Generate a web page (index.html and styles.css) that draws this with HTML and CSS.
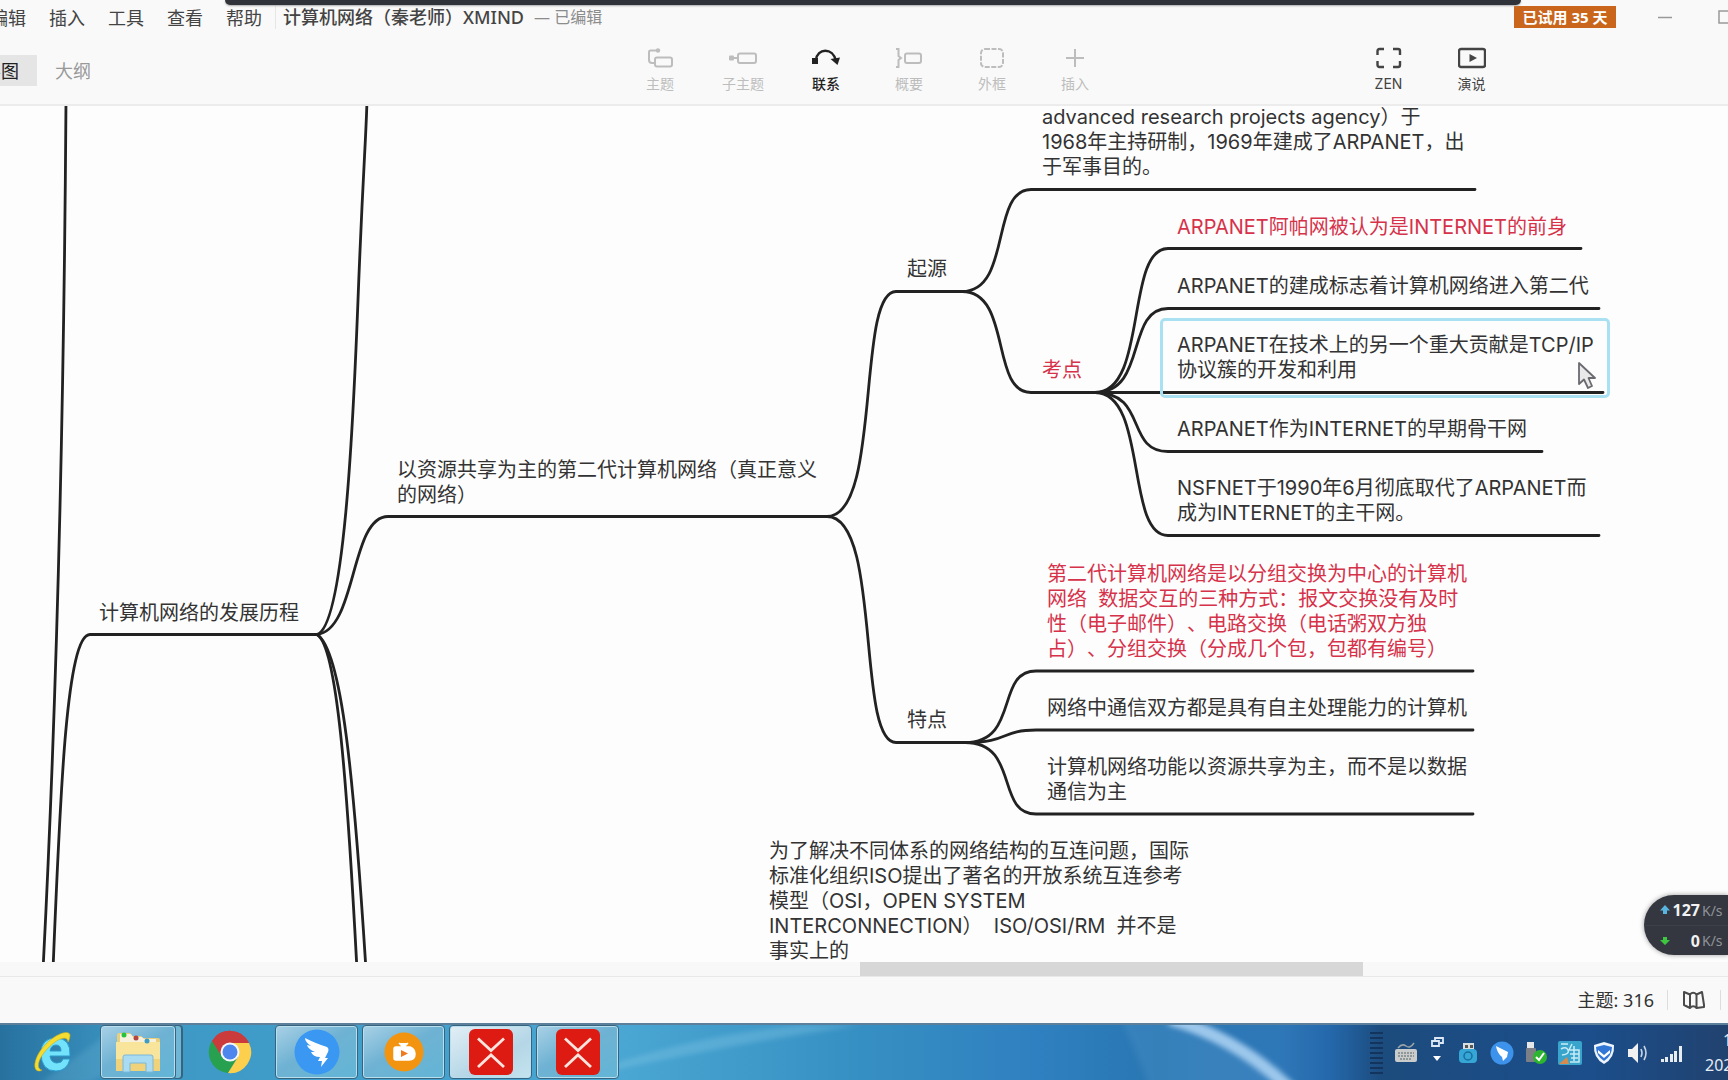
FILE: index.html
```html
<!DOCTYPE html>
<html lang="zh-CN">
<head>
<meta charset="utf-8">
<title>计算机网络（秦老师）XMIND</title>
<link rel="stylesheet" href="styles.css">
</head>
<body>
<div class="app">
  <div class="screen-bar"></div>
  <header class="titlebar">
    <nav class="menu">
      <button type="button">编辑</button>
      <button type="button">插入</button>
      <button type="button">工具</button>
      <button type="button">查看</button>
      <button type="button">帮助</button>
    </nav>
    <div class="doc"><span class="doc-name">计算机网络（秦老师）XMIND</span><span class="doc-state">— 已编辑</span></div>
    <div class="window">
      <button type="button" class="trial">已试用 35 天</button>
      <button type="button" class="win-btn" aria-label="最小化"><svg width="14" height="14" viewBox="0 0 14 14"><path d="M0 7.5H14" stroke="#999" stroke-width="1.5"/></svg></button>
      <button type="button" class="win-btn" aria-label="最大化"><svg width="14" height="14" viewBox="0 0 14 14"><rect x="1" y="1" width="12" height="12" fill="none" stroke="#999" stroke-width="1.5"/></svg></button>
    </div>
  </header>

  <div class="toolbar">
    <div class="views">
      <button type="button" class="view view-on">思维导图</button>
      <button type="button" class="view">大纲</button>
    </div>
    <div class="tools">
      <button type="button" class="tool"><svg width="28" height="24" viewBox="0 0 28 24" fill="none" stroke="currentColor" stroke-width="2"><path d="M11 4.500H4.500Q3 4.500 3 6V14Q3 17 6 17H8"/><circle cx="12" cy="4.500" r="2.200" fill="currentColor" stroke="none"/><rect x="9" y="11.500" width="17" height="9" rx="2"/></svg>主题</button>
      <button type="button" class="tool"><svg width="28" height="24" viewBox="0 0 28 24" fill="none" stroke="currentColor" stroke-width="2"><path d="M3 12H9"/><rect x="0" y="9.500" width="5" height="5" rx="1" fill="currentColor" stroke="none"/><rect x="9" y="7.500" width="18" height="9.500" rx="2"/></svg>子主题</button>
      <button type="button" class="tool tool-on"><svg width="28" height="24" viewBox="0 0 28 24" fill="none" stroke="currentColor" stroke-width="2.400"><path d="M4 14C5 2 21 1 24 15"/><rect x="0" y="12" width="6" height="6" fill="currentColor" stroke="none"/><path d="M18.500 13L28 11.500L25.500 19Z" fill="currentColor" stroke="none"/></svg>联系</button>
      <button type="button" class="tool"><svg width="28" height="24" viewBox="0 0 28 24" fill="none" stroke="currentColor" stroke-width="2"><path d="M1 3H3.500V10L6 12L3.500 14V21H1"/><rect x="10" y="7.500" width="16" height="9.500" rx="2"/></svg>概要</button>
      <button type="button" class="tool"><svg width="28" height="24" viewBox="0 0 28 24" fill="none" stroke="currentColor" stroke-width="2"><rect x="3" y="3" width="22" height="18" rx="4" stroke-dasharray="5 1.500"/></svg>外框</button>
      <button type="button" class="tool"><svg width="28" height="24" viewBox="0 0 28 24" fill="none" stroke="currentColor" stroke-width="2"><path d="M5 12H23M14 3V21"/></svg>插入</button>
    </div>
    <div class="modes">
      <button type="button" class="tool tool-mode"><svg width="28" height="24" viewBox="0 0 28 24" fill="none" stroke="currentColor" stroke-width="2.400"><path d="M2.500 9V5Q2.500 3 4.500 3H9M18 3H23Q25 3 25 5V9M25 15V19Q25 21 23 21H18M9 21H4.500Q2.500 21 2.500 19V15"/></svg>ZEN</button>
      <button type="button" class="tool tool-mode"><svg width="28" height="24" viewBox="0 0 28 24" fill="none" stroke="currentColor" stroke-width="2.400"><rect x="1" y="3" width="26" height="18" rx="2"/><path d="M11.500 8L19 12L11.500 16Z" fill="currentColor" stroke="none"/></svg>演说</button>
    </div>
  </div>

  <main class="canvas">
    <svg class="links" width="1728" height="856" viewBox="0 106 1728 856" fill="none" stroke="#222" stroke-width="2.800" stroke-linecap="round" stroke-linejoin="round">
      <path d="M66 100C64 400 57 700 43 970"/>
      <path d="M53 970C60 800 66 634.500 90 634.500H317"/>
      <path d="M317 634.500C344 626 353 430 358 300S366 140 367 100"/>
      <path d="M317 634.500C357 630 350 516.500 388 516.500H827"/>
      <path d="M317 634.500C337 646 347 780 357 970"/>
      <path d="M317 634.500C342 650 354 780 366 970"/>
      <path d="M827 516.500C882 516.500 856 291.500 896 291.500H966"/>
      <path d="M827 516.500C882 516.500 856 742.500 896 742.500H970"/>
      <path d="M962 291.500C1012 291.500 990 189.500 1031 189.500H1475"/>
      <path d="M962 291.500C1012 291.500 990 392.500 1031 392.500H1603"/>
      <path d="M1095 392.500C1148 392.500 1125 248.500 1168 248.500H1581"/>
      <path d="M1095 392.500C1148 392.500 1125 308.500 1168 308.500H1599"/>
      <path d="M1095 392.500C1148 392.500 1125 451.500 1168 451.500H1542"/>
      <path d="M1095 392.500C1148 392.500 1125 535.500 1168 535.500H1599"/>
      <path d="M965 742.500C1020 742.500 995 671 1036 671H1473"/>
      <path d="M965 742.500C1010 742.500 1000 730 1036 730H1473"/>
      <path d="M965 742.500C1020 742.500 995 814 1036 814H1473"/>
    </svg>
    <div class="selection"></div>
    <p class="node n-history">计算机网络的发展历程</p>
    <p class="node n-second">以资源共享为主的第二代计算机网络（真正意义<br>的网络）</p>
    <p class="node n-origin">起源</p>
    <p class="node n-arpa">advanced research projects agency）于<br>1968年主持研制，1969年建成了ARPANET，出<br>于军事目的。</p>
    <p class="node n-exam red">考点</p>
    <p class="node n-e1 red">ARPANET阿帕网被认为是INTERNET的前身</p>
    <p class="node n-e2">ARPANET的建成标志着计算机网络进入第二代</p>
    <p class="node n-e3">ARPANET在技术上的另一个重大贡献是TCP/IP<br>协议簇的开发和利用</p>
    <p class="node n-e4">ARPANET作为INTERNET的早期骨干网</p>
    <p class="node n-e5">NSFNET于1990年6月彻底取代了ARPANET而<br>成为INTERNET的主干网。</p>
    <p class="node n-feature">特点</p>
    <p class="node n-f1 red">第二代计算机网络是以分组交换为中心的计算机<br>网络&nbsp; 数据交互的三种方式：报文交换没有及时<br>性（电子邮件）、电路交换（电话粥双方独<br>占）、分组交换（分成几个包，包都有编号）</p>
    <p class="node n-f2">网络中通信双方都是具有自主处理能力的计算机</p>
    <p class="node n-f3">计算机网络功能以资源共享为主，而不是以数据<br>通信为主</p>
    <p class="node n-iso">为了解决不同体系的网络结构的互连问题，国际<br>标准化组织ISO提出了著名的开放系统互连参考<br>模型（OSI，OPEN SYSTEM<br>INTERCONNECTION）&nbsp; ISO/OSI/RM&nbsp; 并不是<br>事实上的</p>
    <svg class="cursor" width="20" height="30" viewBox="0 0 20 30"><path d="M2 2V23L7 18.500L11 27L15 25L11.500 17H18Z" fill="#e9e9e9" stroke="#6a6a70" stroke-width="1.800" stroke-linejoin="round"/></svg>
    <aside class="speed">
      <div class="speed-row"><svg width="10" height="10" viewBox="0 0 10 10"><path d="M5 0L10 5.500H7V9H3V5.500H0Z" fill="#57b5e0"/></svg><b>127</b><span>K/s</span></div>
      <div class="speed-row"><svg width="10" height="10" viewBox="0 0 10 10"><path d="M5 9L0 4H3V1H7V4H10Z" fill="#3dc63f"/></svg><b>0</b><span>K/s</span></div>
    </aside>
  </main>
  <div class="scroll"><div class="thumb"></div></div>

  <footer class="status">
    <span class="count">主题: 316</span>
    <button type="button" class="map" aria-label="导航"><svg width="24" height="20" viewBox="0 0 24 20" fill="none" stroke="#4a4a4a" stroke-width="2" stroke-linejoin="round"><path d="M2 2L8 4.500V18L2 15ZM8 4.500Q11 1 14.500 4.500V18Q11 14.500 8 18M14.500 4.500L20 2L22 15V17L14.500 18"/></svg></button>
  </footer>

  <footer class="taskbar">
    <svg class="streak" viewBox="0 0 1728 57" preserveAspectRatio="none" aria-hidden="true">
      <defs><filter id="soft"><feGaussianBlur stdDeviation="3"/></filter></defs>
      <path d="M600 45Q700 10 800 0H860Q720 22 600 50Z" fill="#8fd0ea" opacity=".3" filter="url(#soft)"/>
      <path d="M1120 -8Q1135 25 1150 66H1290Q1235 12 1170 -8Z" fill="#5d9fd4" opacity=".25" filter="url(#soft)"/>
      <path d="M1170 -6Q1235 12 1290 66" fill="none" stroke="#a9d0f2" stroke-width="13" opacity=".9" filter="url(#soft)"/>
      <path d="M40 60L120 0H180L90 60Z" fill="#8fd0ea" opacity=".18" filter="url(#soft)"/>
    </svg>
    <div class="apps">
      <button type="button" class="app-btn plain ie" aria-label="Internet Explorer"><svg width="50" height="48" viewBox="0 0 50 48"><path d="M13 25Q13 10 28 10T42 28H22Q23 35 29 35Q34 35 35 31H42Q39 43 28 43Q13 43 13 25ZM22 23H33Q33 17 28 17T22 23Z" fill="#72e3fa" stroke="#2a9bcc" stroke-width="1" fill-rule="evenodd"/><path d="M12 43C4 44 5 30 17 17C27 6 41 1 42 7C42 10 41 12 40 14C40 7 30 10 21 19C9 31 8 41 14 42Z" fill="#f5dc30" stroke="#c9ae1c" stroke-width=".6"/></svg></button>
      <button type="button" class="app-btn stack" aria-label="资源管理器"><svg width="48" height="46" viewBox="0 0 48 46"><path d="M3 6Q3 4 5 4H16L18 7H27L29 9H44Q46 9 46 11V42H3Z" fill="#e9cf7c"/><path d="M6 5H17L19 8H28L30 10H42V16H6Z" fill="#f6f1dc"/><path d="M2 13H46V42H2Z" fill="#f8e49a"/><path d="M2 30H46V42H2Z" fill="#efd27a"/><circle cx="10" cy="6" r="2.500" fill="#27c33a"/><circle cx="22" cy="9" r="2.500" fill="#b5453f"/><circle cx="33" cy="12" r="2.500" fill="#3c9cc4"/><path d="M9 28Q9 26 11 26H37Q39 26 39 28V43H32V34H16V43H9Z" fill="#a9dbf3" stroke="#7db8d9" stroke-width="1"/></svg></button>
      <button type="button" class="app-btn plain chrome" aria-label="Chrome"><svg width="44" height="44" viewBox="0 0 44 44"><path d="M22 22L4 11A21 21 0 0 1 41 13Z" fill="#cc3b3c"/><path d="M22 22L4 11A21 21 0 0 0 20 43L30 27Z" fill="#27a04f"/><path d="M22 22L22 13H41A21 21 0 0 1 20 43L30 27Z" fill="#fcd04c"/><path d="M4 11A21 21 0 0 1 41 13H22L13 25Z" fill="#cc3b3c"/><circle cx="22" cy="22" r="9.500" fill="#f4f7fb"/><circle cx="22" cy="22" r="7.500" fill="#4d87ee"/></svg></button>
      <button type="button" class="app-btn" aria-label="钉钉"><svg width="46" height="46" viewBox="0 0 46 46"><circle cx="23" cy="23" r="22.500" fill="#3a98f2"/><path d="M11 9Q23 15 33 18Q36 20 33 25L31 29H34L27 38L28 32H24L26 28Q19 28 17 23L21 23Q14 20 13 16L17 17Q11 13 11 9Z" fill="#fff"/></svg></button>
      <button type="button" class="app-btn" aria-label="直播"><svg width="40" height="40" viewBox="0 0 40 40"><circle cx="20" cy="20" r="19.500" fill="#f39410"/><path d="M15 11L18 14H21L24 11M12 15H26Q31 17 31 22Q31 28 25 28H12Q10 28 10 26V17Q10 15 12 15Z" fill="#fff" stroke="#fff" stroke-width="1.500"/><path d="M17 18L24 21.500L17 25Z" fill="#ef7a20"/></svg></button>
      <button type="button" class="app-btn active" aria-label="XMind"><svg width="46" height="46" viewBox="0 0 46 46"><rect x="1" width="44" height="46" rx="6" fill="#dd1b12"/><path d="M10 9.500L23 21.500L36 9.500M10 38L23 26L36 38" fill="none" stroke="#fbe3de" stroke-width="2.800"/></svg></button>
      <button type="button" class="app-btn" aria-label="XMind"><svg width="46" height="46" viewBox="0 0 46 46"><rect x="1" width="44" height="46" rx="6" fill="#dd1b12"/><path d="M10 9.500L23 21.500L36 9.500M10 38L23 26L36 38" fill="none" stroke="#fbe3de" stroke-width="2.800"/></svg></button>
    </div>
    <div class="tray">
      <span class="grip"></span>
      <span class="tray-icon"><svg width="24" height="24" viewBox="0 0 24 24"><path d="M4 7Q8 2 12 5T20 2" fill="none" stroke="#9aa3a8" stroke-width="1.500"/><rect x="1" y="8" width="22" height="13" rx="2" fill="#c9cccb"/><path d="M4 12H20M4 15H20M6 18H18" stroke="#7c8588" stroke-width="1.400" stroke-dasharray="2 1"/></svg></span>
      <span class="tray-icon tray-small"><svg width="14" height="36" viewBox="0 0 14 36"><path d="M5 5V3H13V8H10M2 6H9V11H2Z" fill="none" stroke="#dce9f5" stroke-width="1.800"/><path d="M3 21H11L7 26Z" fill="#fff"/></svg></span>
      <span class="tray-icon"><svg width="24" height="24" viewBox="0 0 24 24"><rect x="7" y="2" width="11" height="8" fill="#d8dddf"/><rect x="9" y="4" width="3" height="3" fill="#555"/><rect x="14" y="4" width="3" height="3" fill="#555"/><rect x="3" y="8" width="18" height="14" rx="4" fill="#35a6d6"/><circle cx="12" cy="15" r="4" fill="none" stroke="#166f9e" stroke-width="1.500"/></svg></span>
      <span class="tray-icon"><svg width="24" height="24" viewBox="0 0 24 24"><circle cx="12" cy="12" r="11.500" fill="#3d93ec"/><path d="M6 5L18 11L17 16L13 20L12 16Q7 12 6 5Z" fill="#fff"/></svg></span>
      <span class="tray-icon"><svg width="24" height="24" viewBox="0 0 24 24"><rect x="3" y="1" width="7" height="7" fill="#e6e6e6"/><rect x="2" y="7" width="10" height="14" rx="1" fill="#7d7f86"/><circle cx="16" cy="16" r="7" fill="#2db52f"/><path d="M12 16L15 19L20 12" fill="none" stroke="#fff" stroke-width="2"/></svg></span>
      <span class="tray-icon"><svg width="24" height="24" viewBox="0 0 24 24"><rect width="24" height="24" rx="2" fill="#3aa5cc"/><path d="M3 3H10M3 8Q8 5 10 9T4 14M14 3L11 9H21V21H12M16 5V20M12 13H21M13 17H20" fill="none" stroke="#c8ecf5" stroke-width="1.500"/><path d="M1 23L9 16L11 23Z" fill="#d68a4d"/></svg></span>
      <span class="tray-icon"><svg width="24" height="24" viewBox="0 0 24 24"><path d="M12 1L22 4Q23 17 12 23Q1 17 2 4Z" fill="#eef5fd"/><path d="M12 4L20 6Q20 15 12 20Q4 15 4 6Z" fill="#3277d6"/><path d="M6 9L12 14L18 9V12L12 17L6 12Z" fill="#fff"/></svg></span>
      <span class="tray-icon"><svg width="24" height="24" viewBox="0 0 24 24"><path d="M2 8H6L12 2V22L6 16H2Z" fill="#f1f1f1"/><path d="M15 8Q17 12 15 16M18 5Q22 12 18 19" fill="none" stroke="#c6d3e2" stroke-width="1.600"/></svg></span>
      <span class="tray-icon"><svg width="24" height="24" viewBox="0 0 24 24" fill="#e8ecef"><path d="M1 18H4V21H1ZM5 16H8V21H5ZM10 13H13V21H10ZM14 10H17V21H14ZM19 5H22V21H19Z"/></svg></span>
      <div class="clock"><span class="time">1</span><span>202</span></div>
    </div>
  </footer>
</div>
</body>
</html>
```
FILE: styles.css
```css
* { box-sizing: border-box; }
body {
  margin: 0;
  background: #f9f9f9;
  color: #333;
  font-family: Inter, "Noto Sans CJK SC", sans-serif;
  font-size: 18px;
  text-spacing-trim: space-all;
}
button {
  margin: 0;
  padding: 0;
  border: 0;
  background: none;
  color: inherit;
  font: inherit;
  white-space: nowrap;
}
svg { display: block; flex: none; }

.app {
  position: relative;
  display: flex;
  flex-direction: column;
  min-height: 100vh;
  overflow: hidden;
}
.screen-bar {
  position: absolute;
  top: 0;
  left: 13%;
  right: 12%;
  height: 5px;
  background: #30343a;
  border-radius: 0 0 6px 6px;
  box-shadow: 0 1px 2px #aaa;
}

/* Title bar */
.titlebar {
  display: flex;
  align-items: center;
  height: 36px;
  padding-bottom: 2px;
  color: #444;
  font-family: "Noto Sans", "Noto Sans CJK SC", sans-serif;
}
.menu { display: flex; gap: 23px; margin-left: -10px; }
.doc {
  display: flex;
  align-items: center;
  gap: 10px;
  margin-left: 13px;
  padding-left: 7px;
  border-left: 1px solid #e6e6e6;
  line-height: 24px;
  white-space: nowrap;
}
.doc-name { font-weight: 500; }
.doc-state { color: #8c8c8c; font-size: 16px; }
.window {
  display: flex;
  align-items: center;
  gap: 46px;
  margin-left: auto;
  margin-right: -4px;
}
.trial {
  width: 102px;
  height: 22px;
  margin-right: -4px;
  background: #c9661c;
  color: #fff;
  font-size: 15px;
  font-weight: 700;
  line-height: 22px;
}

/* Toolbar */
.toolbar {
  display: grid;
  grid-template-columns: 1fr auto 1fr;
  align-items: center;
  height: 70px;
  padding-left: 7px;
  border-bottom: 2px solid #ececec;
}
.views { display: flex; gap: 18px; margin-left: -74px; color: #999; }
.view-on {
  padding: 0 18px 0 14px;
  background: #e5e5e5;
  color: #222;
}
.view { height: 31px; }
.tools, .modes { display: flex; }
.modes { justify-content: flex-end; padding-right: 215px; }
.tool {
  display: flex;
  flex-direction: column;
  align-items: center;
  gap: 4px;
  width: 83px;
  color: #bdbdbd;
  font-size: 14px;
  line-height: 20px;
}
.tool-on { color: #222; font-weight: 500; }
.tool-mode { color: #444; }

/* Mind map */
.canvas {
  position: relative;
  flex: 1 0 auto;
  min-height: 856px;
  overflow: hidden;
  background: #fdfdfd;
}
.links { position: absolute; top: 0; left: 0; }
.node {
  position: absolute;
  margin: 0;
  font-size: 20px;
  line-height: 25px;
  white-space: nowrap;
}
.red { color: #d6324a; }
.n-history { left: 99px; top: 495px; }
.n-second { left: 397px; top: 352px; }
.n-origin { left: 907px; top: 151px; }
.n-arpa { left: 1042px; top: -1px; }
.n-exam { left: 1042px; top: 252px; }
.n-e1 { left: 1177px; top: 109px; }
.n-e2 { left: 1177px; top: 168px; }
.n-e3 { left: 1177px; top: 227px; }
.n-e4 { left: 1177px; top: 311px; }
.n-e5 { left: 1177px; top: 370px; }
.n-feature { left: 907px; top: 602px; }
.n-f1 { left: 1047px; top: 456px; }
.n-f2 { left: 1047px; top: 590px; }
.n-f3 { left: 1047px; top: 649px; }
.n-iso { left: 769px; top: 733px; }
.selection {
  position: absolute;
  left: 1160px;
  top: 212px;
  width: 450px;
  height: 80px;
  border: 3px solid #a9e0f2;
  border-radius: 5px;
}
.cursor { position: absolute; left: 1577px; top: 255px; }
.speed {
  position: absolute;
  right: 0;
  bottom: 7px;
  width: 84px;
  height: 60px;
  background: #343740;
  border-radius: 30px 0 0 30px;
  box-shadow: 0 0 5px #999;
}
.speed-row {
  display: grid;
  grid-template-columns: 10px 28px 24px;
  column-gap: 2px;
  align-items: center;
  height: 30px;
  padding-left: 16px;
  color: #8f9299;
  font-family: "Noto Sans", sans-serif;
  font-size: 14px;
}
.speed-row + .speed-row { border-top: 1px solid #3d4049; }
.speed-row b { color: #f2f2f2; font-size: 16px; text-align: right; }

.scroll { height: 14px; padding-left: 860px; background: #f8f8f8; }
.thumb { width: 58%; height: 14px; background: #d7d7d7; }

.status {
  display: flex;
  align-items: center;
  justify-content: flex-end;
  height: 47px;
  padding-right: 7px;
  border-top: 1px solid #e8e8e8;
  font-family: "Noto Sans", "Noto Sans CJK SC", sans-serif;
  line-height: 24px;
}
.count { padding-right: 13px; }
.map {
  padding: 0 14px;
  border-left: 1px solid #ddd;
  border-right: 1px solid #ddd;
}

/* Windows taskbar */
.taskbar {
  position: relative;
  display: flex;
  justify-content: space-between;
  height: 57px;
  border-top: 2px solid #5c7f9b;
  background: linear-gradient(90deg, #27719f 0, #3d98c4 8%, #419dca 20%, #4aa6d2 36%, #368fc2 50%, #2f80c0 60%, #2976b2 67%, #2f78b8 74%, #2468ab 77%, #1c4b7d 80%, #1b4e8b 92%, #21426f 100%);
}
.streak { position: absolute; inset: 0; width: 100%; height: 100%; }
.apps, .tray { position: relative; display: flex; }
.apps { gap: 4px; padding-left: 26px; }
.app-btn {
  display: flex;
  align-items: center;
  justify-content: center;
  width: 83px;
  height: 54px;
  border: 1px solid #36647f;
  border-radius: 4px;
  background: linear-gradient(150deg, #a9d1e6 0, #6fb2d3 45%, #62b5d6 100%);
  box-shadow: inset 0 0 0 1px #b9deee;
}
.plain { border: 0; background: none; box-shadow: none; }
.ie { width: 54px; }
.ie + .app-btn { width: 76px; margin-left: 16px; margin-right: 8px; }
.stack { box-shadow: inset 0 0 0 1px #b9deee, 6px 0 0 -1px #6fb6d4, 7px 0 0 0 #36647f; }
.chrome { width: 83px; }
.active { background: linear-gradient(150deg, #e3eff6 0, #b4d6e6 60%, #c4e3ee 100%); }

.tray { align-items: center; }
.grip {
  width: 13px;
  height: 42px;
  margin-right: 6px;
  background: repeating-linear-gradient(180deg, #12345d 0, #12345d 2px, transparent 2px, transparent 5px);
}
.tray-icon { display: flex; justify-content: center; width: 34px; }
.tray-small { width: 28px; }
.clock {
  display: flex;
  flex-direction: column;
  width: 39px;
  padding-left: 16px;
  overflow: hidden;
  color: #e6edf5;
  font-family: "Noto Sans", sans-serif;
  font-size: 16px;
  line-height: 25px;
}
.time { padding-left: 18px; }
```
